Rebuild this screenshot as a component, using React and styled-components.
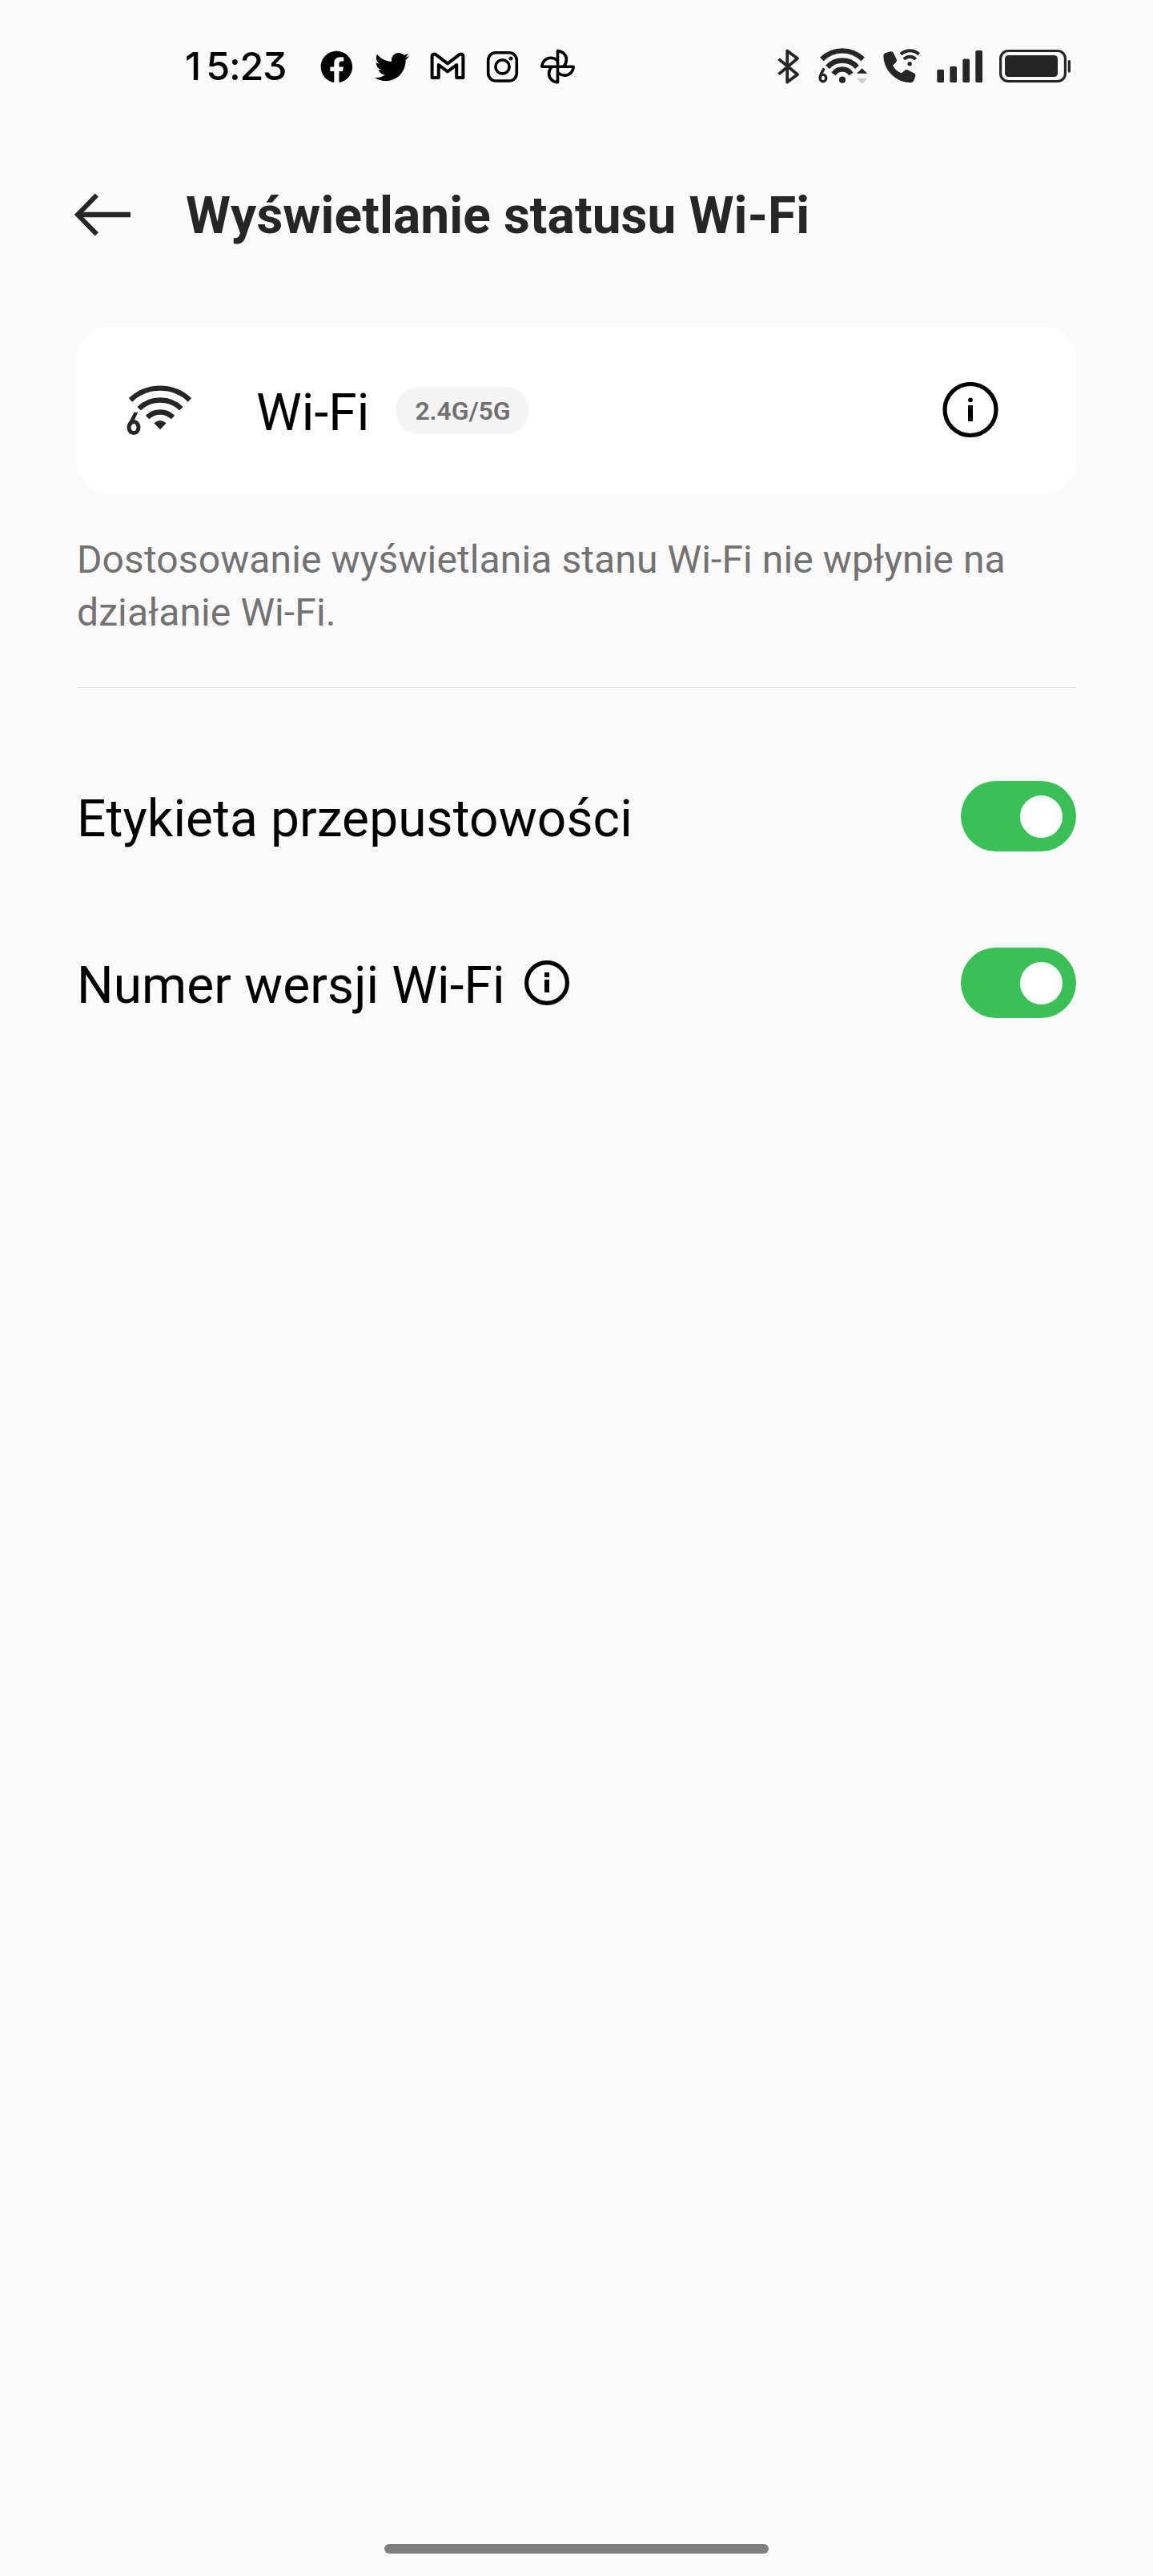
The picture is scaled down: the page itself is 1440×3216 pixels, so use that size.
import React, { useState } from "react";
import styled, { createGlobalStyle } from "styled-components";
import { FaFacebook, FaTwitter } from "react-icons/fa";

const GlobalStyle = createGlobalStyle`
  * {
    box-sizing: border-box;
  }
  body {
    margin: 0;
    background: #fafafa;
    font-family: Roboto, sans-serif;
  }
`;

const GmailIcon = () => (
  <svg width="45" height="44" viewBox="0 0 45 44" fill="none" stroke="#000" strokeWidth="4">
    <path
      d="M3.6 35.9V9.2q0-2.5 2.5-2.5h1.6L23 18.4 38.3 6.7h1.6q2.5 0 2.5 2.5v26.7h-8.2V20L23 28.4 11.8 20v15.9z"
      strokeLinejoin="round"
    />
  </svg>
);

const InstagramIcon = () => (
  <svg width="45" height="44" viewBox="0 0 45 44" fill="none" stroke="#000" strokeWidth="3.6">
    <rect x="4.7" y="4.8" width="35.6" height="35.2" rx="9.5" />
    <circle cx="22.5" cy="22.4" r="8.6" />
    <circle cx="33" cy="12" r="2.5" fill="#000" stroke="none" />
  </svg>
);

const blade = "M22.5 22.2V2.6c6 0 10.9 4.9 10.9 10.9 0 3.4-1.3 6.3-3.6 8.7";

const PhotosIcon = () => (
  <svg width="45" height="44" viewBox="0 0 45 44" fill="none" stroke="#000" strokeWidth="3.6" strokeLinejoin="round">
    {[0, 90, 180, 270].map((angle) => (
      <path key={angle} d={blade} transform={`rotate(${angle} 22.5 22.2)`} />
    ))}
  </svg>
);

const BluetoothIcon = () => (
  <svg width="30" height="44" viewBox="0 0 30 44" fill="none" stroke="#262626" strokeWidth="3.8">
    <path d="M1.5 12.6L25 32 12.2 41.6V2.4L25 12 1.5 31.6" strokeLinejoin="round" />
  </svg>
);

const WifiStatusIcon = () => (
  <svg width="62" height="44" viewBox="0 0 62 44" fill="none" stroke="#262626" strokeWidth="6.4" overflow="visible">
    <path d="M5.3 13a36.3 36.3 0 0 1 51.4 0" />
    <path d="M12.6 22.8a24.6 24.6 0 0 1 36.8 0" />
    <path d="M20 31.4a13.2 13.2 0 0 1 22 0" />
    <circle cx="31" cy="38.7" r="4.1" fill="#262626" stroke="none" />
    <ellipse cx="6.9" cy="36.4" rx="3.8" ry="4.3" strokeWidth="3.4" />
    <path d="M8.4 24.4Q4 30.5 3.2 36" strokeWidth="3.4" />
    <path d="M49 30.8L55.6 24.2l6.6 6.6z" fill="#262626" stroke="none" />
    <path d="M49 36.8h13.2l-6.6 7z" fill="#cdcdcd" stroke="none" />
  </svg>
);

const CallIcon = () => (
  <svg width="47" height="44" viewBox="0 0 141 132" fill="none" stroke="#262626">
    <path
      d="M1 28Q0 20 7 16L27 10Q34 8 38 14L50 38Q53 45 48 51L36 62Q46 82 69 91L81 80Q86 76 92 79L118 92Q123 96 121 102L114 120Q111 126 104 126Q80 128 56 115C24 96 3 68 1 28z"
      fill="#262626"
      stroke="none"
    />
    <path d="M66 20a50 50 0 0 1 68 0" strokeWidth="12" />
    <path d="M78 39a30 30 0 0 1 44 0" strokeWidth="12" />
    <circle cx="99.5" cy="56" r="8" fill="#262626" stroke="none" />
  </svg>
);

const SignalIcon = () => (
  <svg width="57" height="44" viewBox="0 0 57 44" fill="#262626">
    <rect x="0.3" y="25.7" width="8.7" height="16.3" rx="1.8" />
    <rect x="16.3" y="21.7" width="8.7" height="20.3" rx="1.8" />
    <rect x="32.3" y="12.5" width="8.7" height="29.5" rx="1.8" />
    <rect x="48.3" y="2" width="8.7" height="40" rx="1.8" />
  </svg>
);

const BatteryIcon = () => (
  <svg width="90" height="44" viewBox="0 0 90 44" fill="#262626">
    <rect x="2.6" y="2.5" width="80.8" height="38" rx="9.5" fill="none" stroke="#262626" strokeWidth="3.2" />
    <rect x="8" y="8" width="66" height="27" rx="4.5" />
    <rect x="86.7" y="14" width="3.3" height="15.5" rx="1.5" />
  </svg>
);

const BackIcon = () => (
  <svg width="70" height="56" viewBox="0 0 70 56" fill="none" stroke="#262626" strokeWidth="6">
    <path d="M27.8 2.7L4 27l23.8 24.3" />
    <path d="M5 27h65" strokeWidth="6.6" />
  </svg>
);

const WifiIcon = () => (
  <svg width="82" height="64" viewBox="0 0 82 64" fill="none" stroke="#262626" strokeWidth="6.4">
    <path d="M5 19.3a54 54 0 0 1 74 0" />
    <path d="M15.6 30.2a38 38 0 0 1 52.8 0" />
    <path d="M26 41a23 23 0 0 1 32 0" />
    <path d="M34.3 48.3q7.7-6.4 15.4 0L42 56.2z" fill="#262626" stroke="none" />
    <ellipse cx="9" cy="53.6" rx="6" ry="7" strokeWidth="5" />
    <path d="M9.5 34.7h4.8L7 50.5l-5.4-.5z" fill="#262626" stroke="none" />
  </svg>
);

const InfoIcon = () => (
  <svg width="70" height="70" viewBox="0 0 70 70">
    <circle cx="35" cy="34.500" r="32" fill="none" stroke="#000" strokeWidth="5.2" />
    <circle cx="35" cy="22.3" r="2.9" />
    <rect x="32" y="29" width="6" height="20" />
  </svg>
);

const SmallInfoIcon = () => (
  <svg width="56" height="56" viewBox="0 0 56 56">
    <circle cx="28" cy="28" r="25.4" fill="none" stroke="#000" strokeWidth="5.2" />
    <rect x="25" y="15" width="6" height="6" />
    <rect x="25" y="24" width="6" height="16" />
  </svg>
);

export default function App() {
  const [bandLabel, setBandLabel] = useState(true);
  const [version, setVersion] = useState(true);

  return (
    <Screen>
      <GlobalStyle />
      <StatusBar>
        <Clock>15:23</Clock>
        <Notifications>
          <Slot>
            <FaFacebook size={40.8} />
          </Slot>
          <Slot>
            <FaTwitter size={43} />
          </Slot>
          <GmailIcon />
          <InstagramIcon />
          <PhotosIcon />
        </Notifications>
        <SystemIcons>
          <BluetoothIcon />
          <WifiStatusIcon />
          <CallIcon />
          <SignalIcon />
          <BatteryIcon />
        </SystemIcons>
      </StatusBar>
      <Header>
        <BackIcon />
        <Title>Wyświetlanie statusu Wi-Fi</Title>
      </Header>
      <Content>
        <Card>
          <WifiIcon />
          <CardName>Wi-Fi</CardName>
          <Badge>2.4G/5G</Badge>
          <InfoButton aria-label="Informacje">
            <InfoIcon />
          </InfoButton>
        </Card>
        <Description>
          Dostosowanie wyświetlania stanu Wi-Fi nie wpłynie na działanie Wi-Fi.
        </Description>
        <Divider />
        <Row>
          <Label>Etykieta przepustowości</Label>
          <Toggle $on={bandLabel} onClick={() => setBandLabel(!bandLabel)}>
            <Knob />
          </Toggle>
        </Row>
        <Row>
          <Label>Numer wersji Wi-Fi</Label>
          <SmallInfoIcon />
          <Toggle $on={version} onClick={() => setVersion(!version)}>
            <Knob />
          </Toggle>
        </Row>
      </Content>
      <HomeBar />
    </Screen>
  );
}

const Screen = styled.div`
  display: flex;
  flex-direction: column;
  width: 1440px;
  height: 3216px;
  background: #fafafa;
  color: #000;
  letter-spacing: 0.09px;
  svg {
    display: block;
    flex-shrink: 0;
  }
`;

const StatusBar = styled.div`
  display: flex;
  align-items: center;
  height: 166px;
  padding: 0 103px 0 231px;
`;

const Clock = styled.div`
  width: 167px;
  font-family: Inter, sans-serif;
  font-size: 48.5px;
  font-weight: 500;
  line-height: 60px;
  letter-spacing: -1.2px;
  font-feature-settings: "cv09";
  &::first-letter {
    letter-spacing: 6px;
  }
`;

const Notifications = styled.div`
  display: flex;
  align-items: center;
  gap: 24px;
`;

const Slot = styled.span`
  display: flex;
  justify-content: center;
  width: 45px;
`;

const SystemIcons = styled.div`
  display: flex;
  align-items: center;
  gap: 20px;
  margin-left: auto;
`;

const Header = styled.header`
  display: flex;
  align-items: center;
  gap: 69px;
  height: 206px;
  padding-left: 93px;
`;

const Title = styled.h1`
  margin: 0;
  padding-top: 2px;
  color: #262626;
  font-size: 64px;
  font-weight: 700;
  line-height: 76px;
  white-space: nowrap;
`;

const Content = styled.main`
  flex: 1;
  padding: 36px 96px 0;
`;

const Card = styled.section`
  display: flex;
  align-items: center;
  height: 208px;
  padding: 0 97px 0 62px;
  border-radius: 40px;
  background: #fff;
`;

const CardName = styled.span`
  margin-left: 80px;
  padding-top: 8px;
  font-size: 64px;
  line-height: 76px;
`;

const Badge = styled.span`
  width: 167px;
  height: 59px;
  margin-left: 33px;
  border-radius: 30px;
  background: #f4f4f4;
  color: #707070;
  font-size: 32px;
  font-weight: 600;
  line-height: 61px;
  letter-spacing: -0.1px;
  text-align: center;
`;

const InfoButton = styled.button`
  margin-left: auto;
  padding: 0;
  border: 0;
  background: none;
`;

const Description = styled.p`
  margin: 50px 0 60px;
  color: #727272;
  font-size: 48px;
  line-height: 66px;
  letter-spacing: 0.11px;
`;

const Divider = styled.div`
  height: 1px;
  margin-bottom: 56px;
  background: #dedede;
`;

const Row = styled.div`
  display: flex;
  align-items: center;
  height: 208px;
`;

const Label = styled.span`
  padding-top: 8px;
  margin-right: 24px;
  font-size: 64px;
  line-height: 76px;
`;

const Toggle = styled.button`
  display: flex;
  align-items: center;
  justify-content: ${(props) => (props.$on ? "flex-end" : "flex-start")};
  width: 144px;
  height: 88px;
  margin-left: auto;
  padding: 0 17px;
  border: 0;
  border-radius: 44px;
  background: ${(props) => (props.$on ? "#3bc058" : "#d9d9d9")};
`;

const Knob = styled.span`
  width: 53px;
  height: 53px;
  border-radius: 50%;
  background: #fff;
`;

const HomeBar = styled.div`
  width: 480px;
  height: 12px;
  margin: 0 auto 28px;
  border-radius: 6px;
  background: #7f7f7f;
`;
